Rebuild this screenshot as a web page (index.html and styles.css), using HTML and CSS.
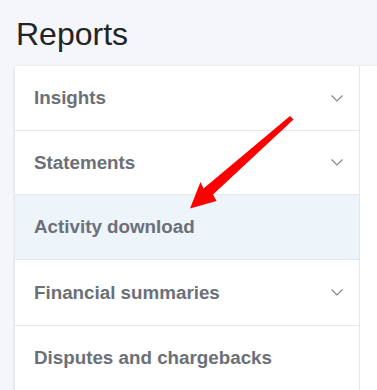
FILE: index.html
```html
<!DOCTYPE html>
<html>
  <head>
    <meta charset="UTF-8">
    <title>Reports</title>
    <link rel="stylesheet" href="styles.css">
  </head>
  <body>
    <h1 class="page-title">Reports</h1>

    <div class="panel">
      <ul class="report-nav">
        <li class="nav-item">
          <span>Insights</span>
          <svg class="chevron" width="12" height="7" viewBox="0 0 12 7"><path d="M0.5 0.5 L6 6 L11.5 0.5" /></svg>
        </li>
        <li class="nav-item short">
          <span>Statements</span>
          <svg class="chevron" width="12" height="7" viewBox="0 0 12 7"><path d="M0.5 0.5 L6 6 L11.5 0.5" /></svg>
        </li>
        <li class="nav-item active">
          <span>Activity download</span>
        </li>
        <li class="nav-item tall">
          <span>Financial summaries</span>
          <svg class="chevron" width="12" height="7" viewBox="0 0 12 7"><path d="M0.5 0.5 L6 6 L11.5 0.5" /></svg>
        </li>
        <li class="nav-item">
          <span>Disputes and chargebacks</span>
        </li>
      </ul>
      <div class="content"></div>
    </div>

    <!-- annotation arrow -->
    <svg class="callout" width="377" height="390" viewBox="0 0 377 390">
      <polygon points="290,116 293.5,119.5 213,194.5 216.5,201 190,208.5 200.5,182 203.5,188.5" />
    </svg>
  </body>
</html>
```

FILE: styles.css
```css
body {
  margin: 0;
  background-color: #F5F6FA;
  font-family: 'Liberation Sans', Arial, sans-serif;
  overflow: hidden;
}

/* Title styling */
.page-title {
  margin: 0;
  padding: 14px 16px 0 16px;
  height: 52px;
  font-size: 32px;
  font-weight: normal;
  color: #222426;
  line-height: 40px;
}

/* Card with nav list */
.panel {
  display: flex;
  margin-left: 15px;
  background-color: #FFFFFF;
  box-shadow: 0px 1px 3px rgba(0, 0, 0, 0.16);
}

.report-nav {
  list-style: none;
  margin: 0;
  padding: 0;
  width: 344px;
  border-right: 1px solid #E6E6E6;
}

.nav-item {
  display: flex;
  align-items: center;
  justify-content: space-between;
  height: 64px;
  padding: 0 16px 0 19px;
  border-bottom: 1px solid #E8E8E8;
  font-size: 18.8px;
  font-weight: bold;
  color: #6B7078;
}

.nav-item.short {
  height: 63px;
}

.nav-item.tall {
  height: 65px;
}

.nav-item.active {
  background-color: #EDF4FA;
}

.chevron {
  fill: none;
  stroke: #7E858E;
  stroke-width: 1.1;
}

.content {
  flex: 1;
}

/* Red arrow overlay */
.callout {
  position: absolute;
  top: 0;
  left: 0;
}

.callout polygon {
  fill: #FF0000;
}
```
